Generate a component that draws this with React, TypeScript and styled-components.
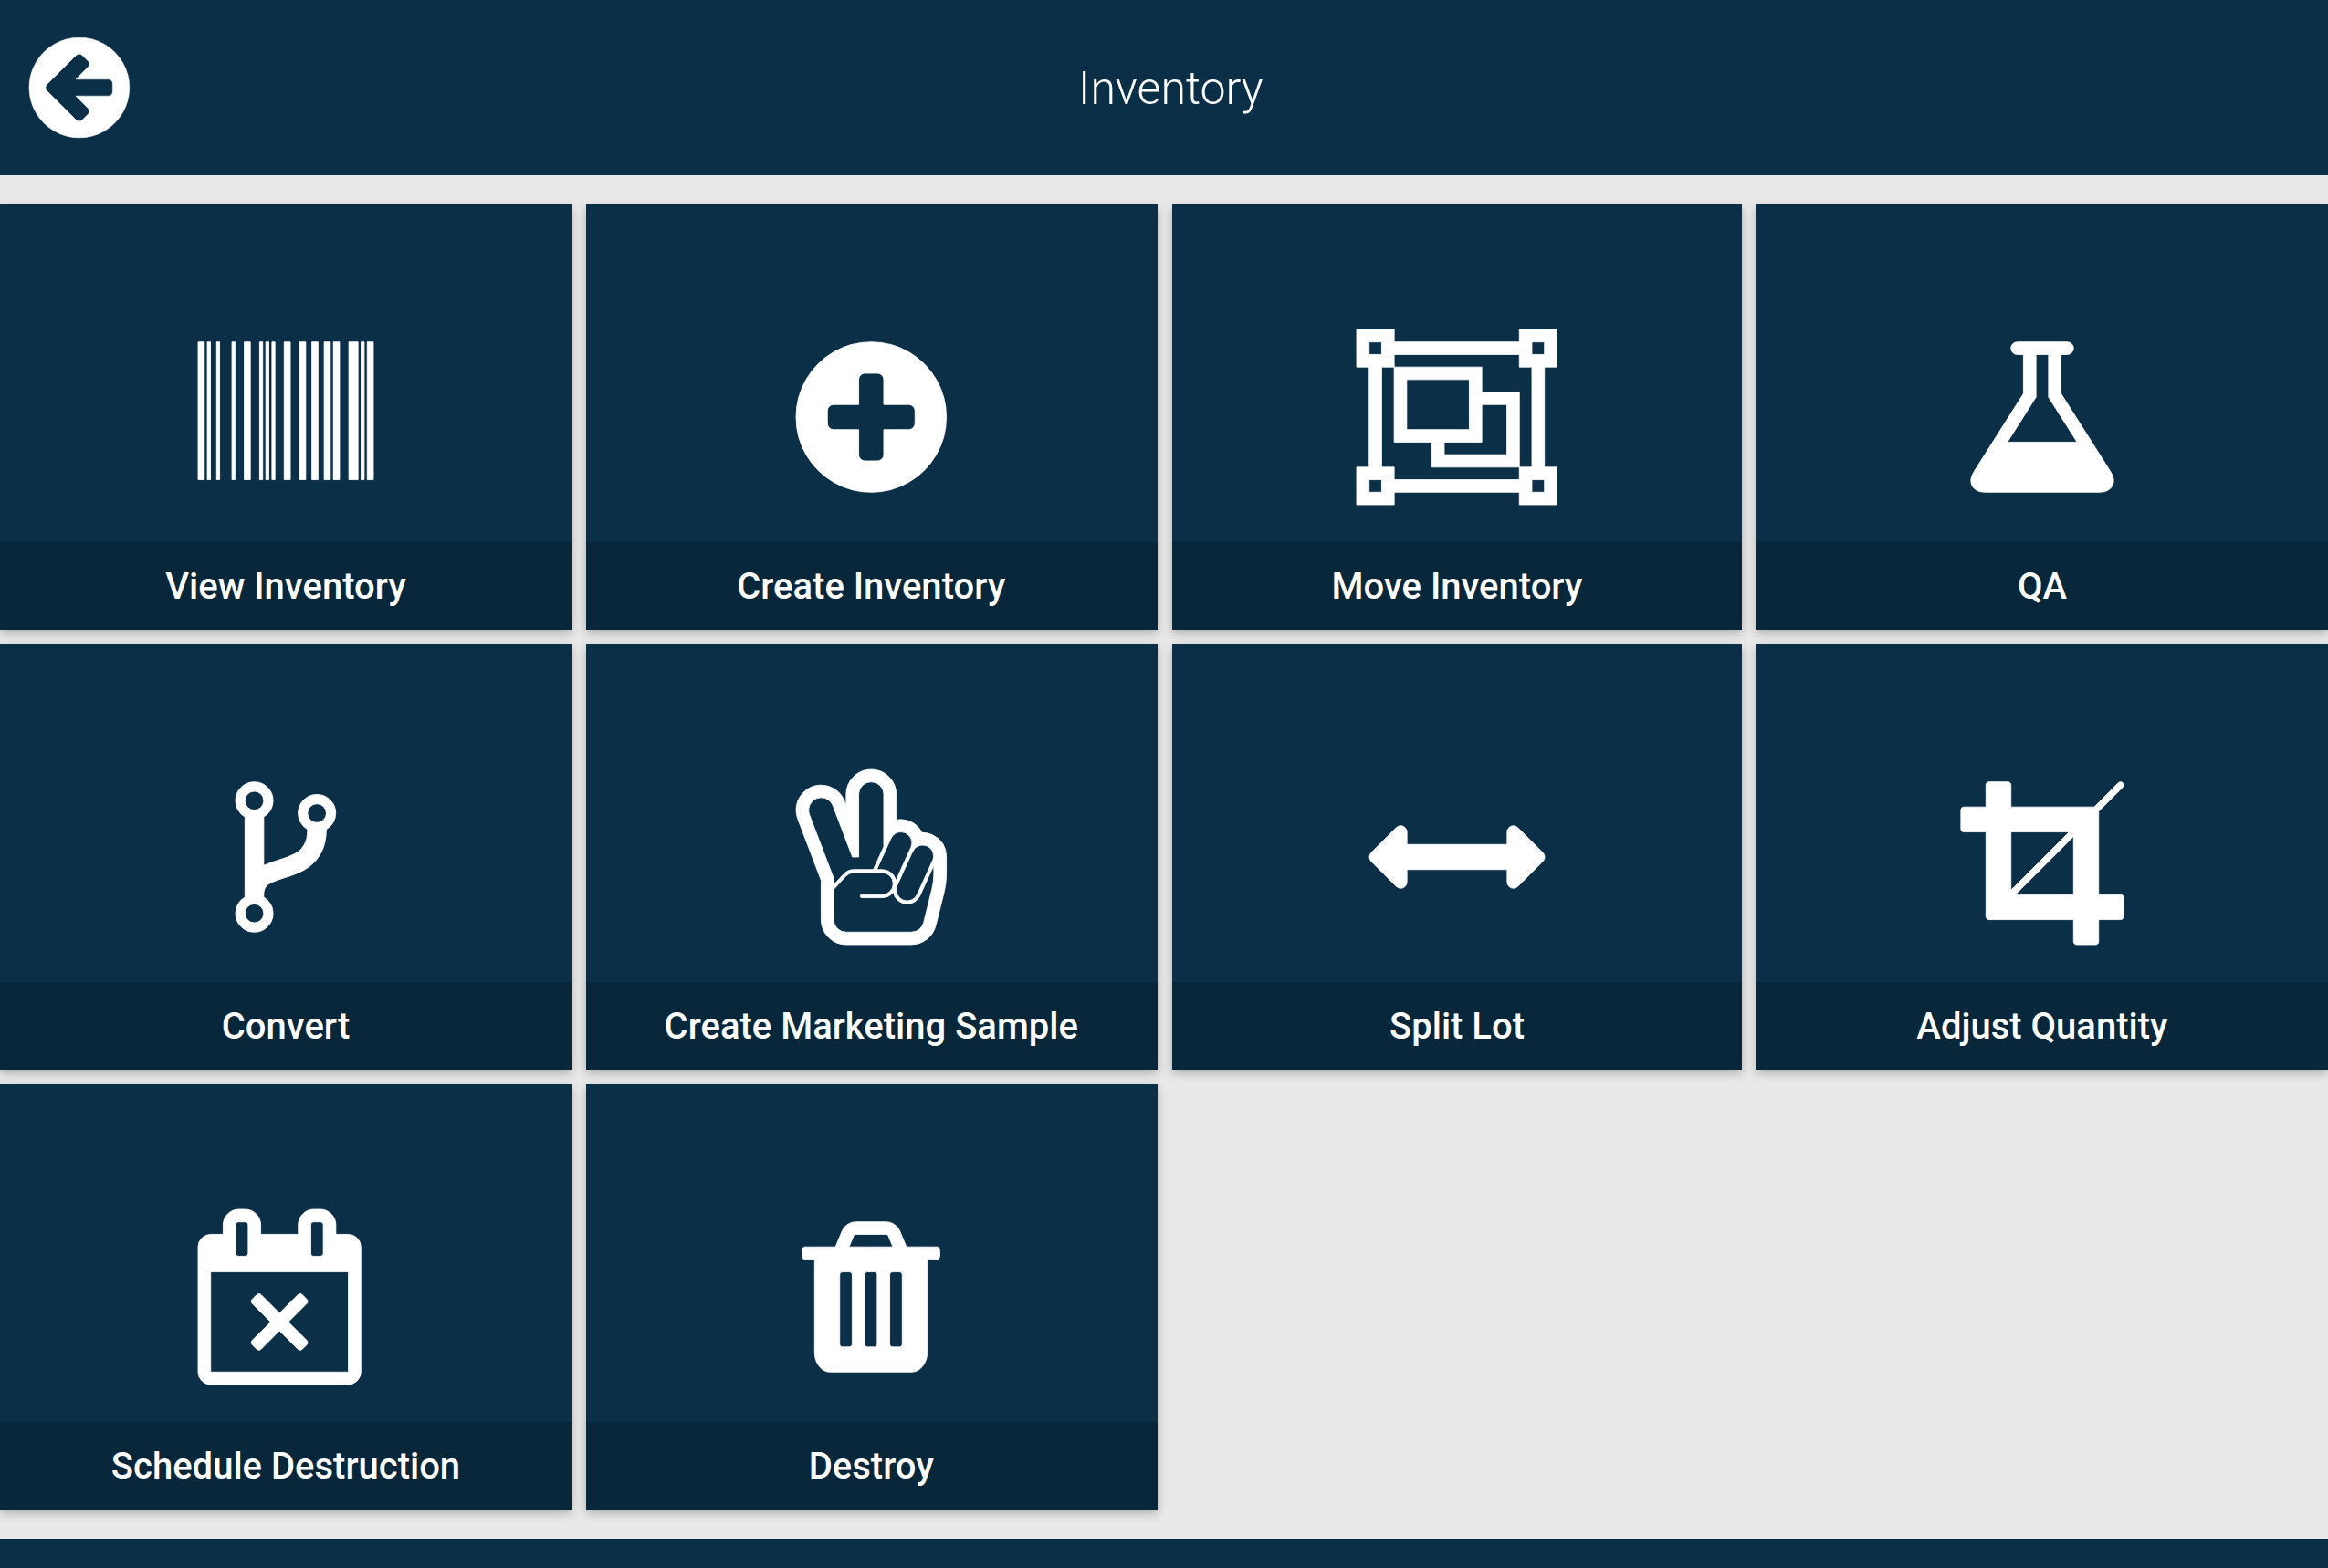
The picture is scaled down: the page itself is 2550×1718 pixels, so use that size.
import React from "react";
import styled, { createGlobalStyle } from "styled-components";

const colors = {
  navy: "#0b2f47",
  label: "#08273a",
  page: "#e9e9e9",
  white: "#ffffff",
};

const GlobalStyle = createGlobalStyle`
  *, *::before, *::after { box-sizing: border-box; }
  html, body, #root { height: 100%; }
  body {
    margin: 0;
    background: ${colors.page};
    color: ${colors.white};
    font-family: Roboto, "Liberation Sans", sans-serif;
    overflow: hidden;
  }
`;

/* Icon outlines share a 1792-unit em; `width` is the advance of the glyph. */
type Glyph = { d: string; width: number; x?: number; flipped?: boolean };

const DISC =
  "q0 209-103 385.5t-279.5 279.5-385.5 103-385.5-103-279.5-279.5-103-385.5 103-385.5 279.5-279.5 385.5-103 385.5 103 279.5 279.5 103 385.5z";

const bars: Array<[number, number]> = [
  [0, 63], [94, 32], [189, 31], [346, 31], [472, 62], [629, 31], [692, 31], [755, 31],
  [880, 63], [1037, 63], [1163, 63], [1289, 63], [1383, 63], [1541, 94], [1666, 32], [1729, 63],
];

const glyphs = {
  back: {
    x: 128,
    width: 1536,
    d:
      "M1408 960v-128q0-26-19-45t-45-19h-502l189-189q19-19 19-45t-19-45l-91-91q-18-18-45-18t-45 18l-362 362-91 91q-18 18-18 45t18 45l91 91 362 362q18 18 45 18t45-18l91-91q18-18 18-45t-18-45l-189-189h502q26 0 45-19t19-45zm256-64" +
      DISC,
  },
  barcode: {
    width: 1792,
    d: bars.map(([x, w]) => `M${x} 128h${w}v1408h${-w}z`).join(""),
  },
  plus: {
    x: 128,
    width: 1536,
    d:
      "M1344 960v-128q0-26-19-45t-45-19h-256v-256q0-26-19-45t-45-19h-128q-26 0-45 19t-19 45v256h-256q-26 0-45 19t-19 45v128q0 26 19 45t45 19h256v256q0 26 19 45t45 19h128q26 0 45-19t19-45v-256h256q26 0 45-19t19-45zm320-64" +
      DISC,
  },
  group: {
    width: 2048,
    d:
      "M0 0h384v128h1280v-128h384v384h-128v1024h128v384h-384v-128h-1280v128h-384v-384h128v-1024h-128z" +
      "M128 128v128h128v-128zM1792 128v128h128v-128zM128 1536v128h128v-128zM1792 1536v128h128v-128z" +
      "M384 256v128h-128v1024h128v128h1280v-128h128v-1024h-128v-128z" +
      "M384 384h896v256h384v768h-896v-256h-384zM512 512v512h640v-512zM1280 768v384h-384v128h640v-512z",
  },
  flask: {
    width: 1792,
    d: "M1591 1448q56 89 21.5 152.5t-140.5 63.5h-1152q-106 0-140.5-63.5t21.5-152.5l503-793v-399h-64q-26 0-45-19t-19-45 19-45 45-19h512q26 0 45 19t19 45-19 45-45 19h-64v399zm-779-725l-272 429h712l-272-429-20-31v-436h-128v436z",
  },
  fork: {
    x: 384,
    width: 1024,
    d: "M672 1472q0-40-28-68t-68-28-68 28-28 68 28 68 68 28 68-28 28-68zm0-1152q0-40-28-68t-68-28-68 28-28 68 28 68 68 28 68-28 28-68zm640 128q0-40-28-68t-68-28-68 28-28 68 28 68 68 28 68-28 28-68zm96 0q0 52-26 96.5t-70 69.5q-2 287-226 414-67 38-203 81-128 40-169.5 71t-41.5 100v26q44 25 70 69.5t26 96.5q0 80-56 136t-136 56-136-56-56-136q0-52 26-96.5t70-69.5v-820q-44-25-70-69.5t-26-96.5q0-80 56-136t136-56 136 56 56 136q0 52-26 96.5t-70 69.5v497q54-26 154-57 55-17 87.5-29.5t70.5-31 59-39.5 40.5-51 28-69.5 8.5-91.5q-44-25-70-69.5t-26-96.5q0-80 56-136t136-56 136 56 56 136z",
  },
  peace: {
    width: 1536,
    flipped: true,
    d:
      "M1288 889q60 0 107-23q141-70 141-225v-177q0-94-23-186l-85-339q-21-86-91.5-141t-158.5-54h-666q-106 0-181 75t-75 181v401l-239 628q-17 45-17 91q0 106 75 181t181 75q80 0 145.5-45.5t93.5-119.5l17-44v113q0 106 75 181t181 75t181-75t75-181v-261q27 5 48 5q69 0 127.5-36.5t88.5-98.5z" +
      "M1072 896q-33 0-60.5-18t-41.5-48l-145-318h55q50 0 90-31.5t50-80.5l154 338q10 20 10 46q0 46-33 79t-79 33z" +
      "M1293 761q-22 0-40.5-8t-29-16t-23.5-29.5t-17-30.5t-17-37l-132-290q-10-20-10-46q0-46 33-79t79-33q33 0 60.5 18t41.5 48l160 352q8 18 8 38q0 50-32 81.5t-81 31.5z" +
      "M128 1120q0-22 8-46l248-650v-69l102 111q43 46 106 46h198l106 233v535q0 54-37 91t-91 37t-91-37t-37-91v-640h-64l-200 526q-14 37-47 59.5t-73 22.5q-53 0-90.5-37.5t-37.5-90.5z" +
      "M384 308l125 136q34 36 83 36h288a112 112 0 0 0 0-224h-208a16 16 0 0 1 0-32h208a144 144 0 0 1 114 56a144 144 0 0 1 142-120q42 0 77.500 22.500t53.500 61.500l141 310v-90q0-77-20-155l-84-339q-11-43-46-70.500t-80-27.500h-666q-53 0-90.500 37.500t-37.500 90.500z",
  },
  arrows: {
    width: 1792,
    d: "M1792 896q0 26-19 45l-256 256q-19 19-45 19t-45-19-19-45v-128h-1024v128q0 26-19 45t-45 19-45-19l-256-256q-19-19-19-45t19-45l256-256q19-19 45-19t45 19 19 45v128h1024v-128q0-26 19-45t45-19 45 19l256 256q19 19 19 45z",
  },
  crop: {
    width: 1792,
    d: "M621 1280h595v-595zm-45-45l595-595h-595v595zm1152 77v192q0 14-9 23t-23 9h-224v224q0 14-9 23t-23 9h-192q-14 0-23-9t-9-23v-224h-864q-14 0-23-9t-9-23v-864h-224q-14 0-23-9t-9-23v-192q0-14 9-23t23-9h224v-224q0-14 9-23t23-9h192q14 0 23 9t9 23v224h851l246-247q10-9 23-9t23 9q9 10 9 23t-9 23l-247 246v851h224q14 0 23 9t9 23z",
  },
  calendar: {
    width: 1792,
    d: "M1111 1385l-46 46q-9 9-22 9t-23-9l-188-189-188 189q-10 9-23 9t-22-9l-46-46q-9-9-9-22t9-23l189-188-189-188q-9-10-9-23t9-22l46-46q9-9 22-9t23 9l188 188 188-188q10-9 23-9t22 9l46 46q9 9 9 22t-9 23l-188 188 188 188q9 10 9 23t-9 22zm-983 279h1408v-1024h-1408v1024zm384-1216v-288q0-14-9-23t-23-9h-64q-14 0-23 9t-9 23v288q0 14 9 23t23 9h64q14 0 23-9t9-23zm768 0v-288q0-14-9-23t-23-9h-64q-14 0-23 9t-9 23v288q0 14 9 23t23 9h64q14 0 23-9t9-23zm384-64v1280q0 52-38 90t-90 38h-1408q-52 0-90-38t-38-90v-1280q0-52 38-90t90-38h128v-96q0-66 47-113t113-47h64q66 0 113 47t47 113v96h384v-96q0-66 47-113t113-47h64q66 0 113 47t47 113v96h128q52 0 90 38t38 90z",
  },
  trash: {
    width: 1792,
    d: "M704 1376v-704q0-14-9-23t-23-9h-64q-14 0-23 9t-9 23v704q0 14 9 23t23 9h64q14 0 23-9t9-23zm256 0v-704q0-14-9-23t-23-9h-64q-14 0-23 9t-9 23v704q0 14 9 23t23 9h64q14 0 23-9t9-23zm256 0v-704q0-14-9-23t-23-9h-64q-14 0-23 9t-9 23v704q0 14 9 23t23 9h64q14 0 23-9t9-23zm-544-992h448l-48-117q-7-9-17-11h-317q-10 2-17 11zm928 32v64q0 14-9 23t-23 9h-96v948q0 83-47 143.5t-113 60.500h-832q-66 0-113-58.500t-47-141.500v-952h-96q-14 0-23-9t-9-23v-64q0-14 9-23t23-9h309l70-167q15-37 54-63t79-26h320q40 0 79 26t54 63l70 167h309q14 0 23 9t9 23z",
  },
} satisfies Record<string, Glyph>;

type GlyphName = keyof typeof glyphs;

const IconSvg = styled.svg<{ $size: number; $ratio: number }>`
  display: block;
  flex: none;
  height: ${(p) => p.$size}px;
  width: ${(p) => p.$size * p.$ratio}px;
  overflow: visible;
  fill: currentColor;
  fill-rule: evenodd;
  stroke: currentColor;
  stroke-width: 8;
`;

function Icon({ name, size }: { name: GlyphName; size: number }) {
  const g: Glyph = glyphs[name];
  return (
    <IconSvg
      $size={size}
      $ratio={g.width / 1792}
      viewBox={`${g.x ?? 0} 0 ${g.width} 1792`}
      aria-hidden="true"
    >
      <path d={g.d} transform={g.flipped ? "translate(0 1536) scale(1 -1)" : undefined} />
    </IconSvg>
  );
}

const Screen = styled.div`
  display: flex;
  flex-direction: column;
  height: 1718px;
`;

const Header = styled.header`
  display: flex;
  align-items: center;
  flex: none;
  height: 192px;
  padding: 0 127px 0 32px;
  background: ${colors.navy};
`;

const BackButton = styled.button`
  flex: none;
  display: flex;
  padding: 0;
  border: 0;
  background: none;
  color: inherit;
`;

const Title = styled.h1`
  flex: 1;
  margin: 0;
  padding-top: 2px;
  text-align: center;
  font-size: 50px;
  font-weight: 300;
  line-height: 60px;
`;

const TileIcon = styled.div`
  flex: 1;
  display: flex;
  justify-content: center;
  align-items: flex-start;
  padding-top: 137px;
`;

const TileLabel = styled.div`
  flex: none;
  height: 96px;
  padding-top: 1px;
  text-align: center;
  background: ${colors.label};
  font-size: 40px;
  font-weight: 500;
  line-height: 96px;
  white-space: nowrap;
`;

const Tile = styled.a`
  display: flex;
  flex-direction: column;
  background: ${colors.navy};
  box-shadow: 0 4px 10px rgba(0, 0, 0, 0.26);
`;

const Grid = styled.main`
  flex: 1;
  display: grid;
  grid-template-columns: 626px 626px 624px 626px;
  grid-auto-rows: 466px;
  gap: 16px;
  padding: 32px 0;

  ${Tile}:nth-child(4n + 2) > * {
    padding-right: 1.5px;
  }
`;

const Footer = styled.footer`
  flex: none;
  height: 32px;
  background: ${colors.navy};
`;

const tiles: Array<{ icon: GlyphName; label: string }> = [
  { icon: "barcode", label: "View Inventory" },
  { icon: "plus", label: "Create Inventory" },
  { icon: "group", label: "Move Inventory" },
  { icon: "flask", label: "QA" },
  { icon: "fork", label: "Convert" },
  { icon: "peace", label: "Create Marketing Sample" },
  { icon: "arrows", label: "Split Lot" },
  { icon: "crop", label: "Adjust Quantity" },
  { icon: "calendar", label: "Schedule Destruction" },
  { icon: "trash", label: "Destroy" },
];

export default function App() {
  return (
    <>
      <GlobalStyle />
      <Screen>
        <Header>
          <BackButton aria-label="Back">
            <Icon name="back" size={128} />
          </BackButton>
          <Title>Inventory</Title>
        </Header>
        <Grid>
          {tiles.map((t) => (
            <Tile key={t.label}>
              <TileIcon>
                <Icon name={t.icon} size={192} />
              </TileIcon>
              <TileLabel>{t.label}</TileLabel>
            </Tile>
          ))}
        </Grid>
        <Footer />
      </Screen>
    </>
  );
}
